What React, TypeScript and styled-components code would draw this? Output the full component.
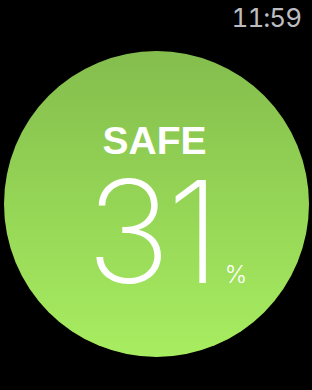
import React from "react";
import styled, { createGlobalStyle } from "styled-components";

const Global = createGlobalStyle`
  html, body { margin: 0; padding: 0; background: #000; }
  body { width: 312px; height: 390px; overflow: hidden; font-family: "Liberation Sans", Arial, sans-serif; }
`;

const Screen = styled.div`
  width: 312px;
  height: 390px;
  background: #000;
  display: flex;
  flex-direction: column;
`;

const StatusBar = styled.div`
  height: 36px;
  display: flex;
  justify-content: flex-end;
  align-items: flex-start;
  padding-right: 11px;
`;

const Time = styled.span`
  font-family: "Inter", "Liberation Sans", sans-serif;
  font-weight: 400;
  font-size: 26px;
  line-height: 36px;
  color: #bdbdc1;
  font-variant-numeric: tabular-nums;
  letter-spacing: -1px;
`;

const Circle = styled.div`
  margin: 15px 0 0 4px;
  width: 305px;
  height: 306px;
  border-radius: 50%;
  background: linear-gradient(180deg, #84bd4d 0%, #95d556 50%, #a8ed61 100%);
  display: flex;
  flex-direction: column;
  align-items: center;
  padding-top: 70px;
  box-sizing: border-box;
`;

const Status = styled.div`
  font-family: "Liberation Sans", Arial, sans-serif;
  font-weight: 700;
  font-size: 39px;
  line-height: 40px;
  color: #fff;
  margin-left: -4px;
`;

const ValueRow = styled.div`
  width: 100%;
  display: grid;
  grid-template-columns: 1fr auto 1fr;
  align-items: baseline;
  margin-top: 18px;
`;

const Number = styled.span`
  grid-column: 2;
  font-family: "Inter", "Liberation Sans", sans-serif;
  font-weight: 250;
  font-size: 142px;
  line-height: 104px;
  color: #fff;
  letter-spacing: -4px;
  margin-left: -10px;
`;

const Unit = styled.span`
  grid-column: 3;
  justify-self: start;
  font-family: "Inter", "Liberation Sans", sans-serif;
  font-weight: 300;
  font-size: 24px;
  line-height: 24px;
  color: #fff;
  margin-left: 8px;
`;

export default function App() {
  return (
    <>
      <Global />
      <Screen>
        <StatusBar>
          <Time>11:59</Time>
        </StatusBar>
        <Circle>
          <Status>SAFE</Status>
          <ValueRow>
            <Number>31</Number>
            <Unit>%</Unit>
          </ValueRow>
        </Circle>
      </Screen>
    </>
  );
}
